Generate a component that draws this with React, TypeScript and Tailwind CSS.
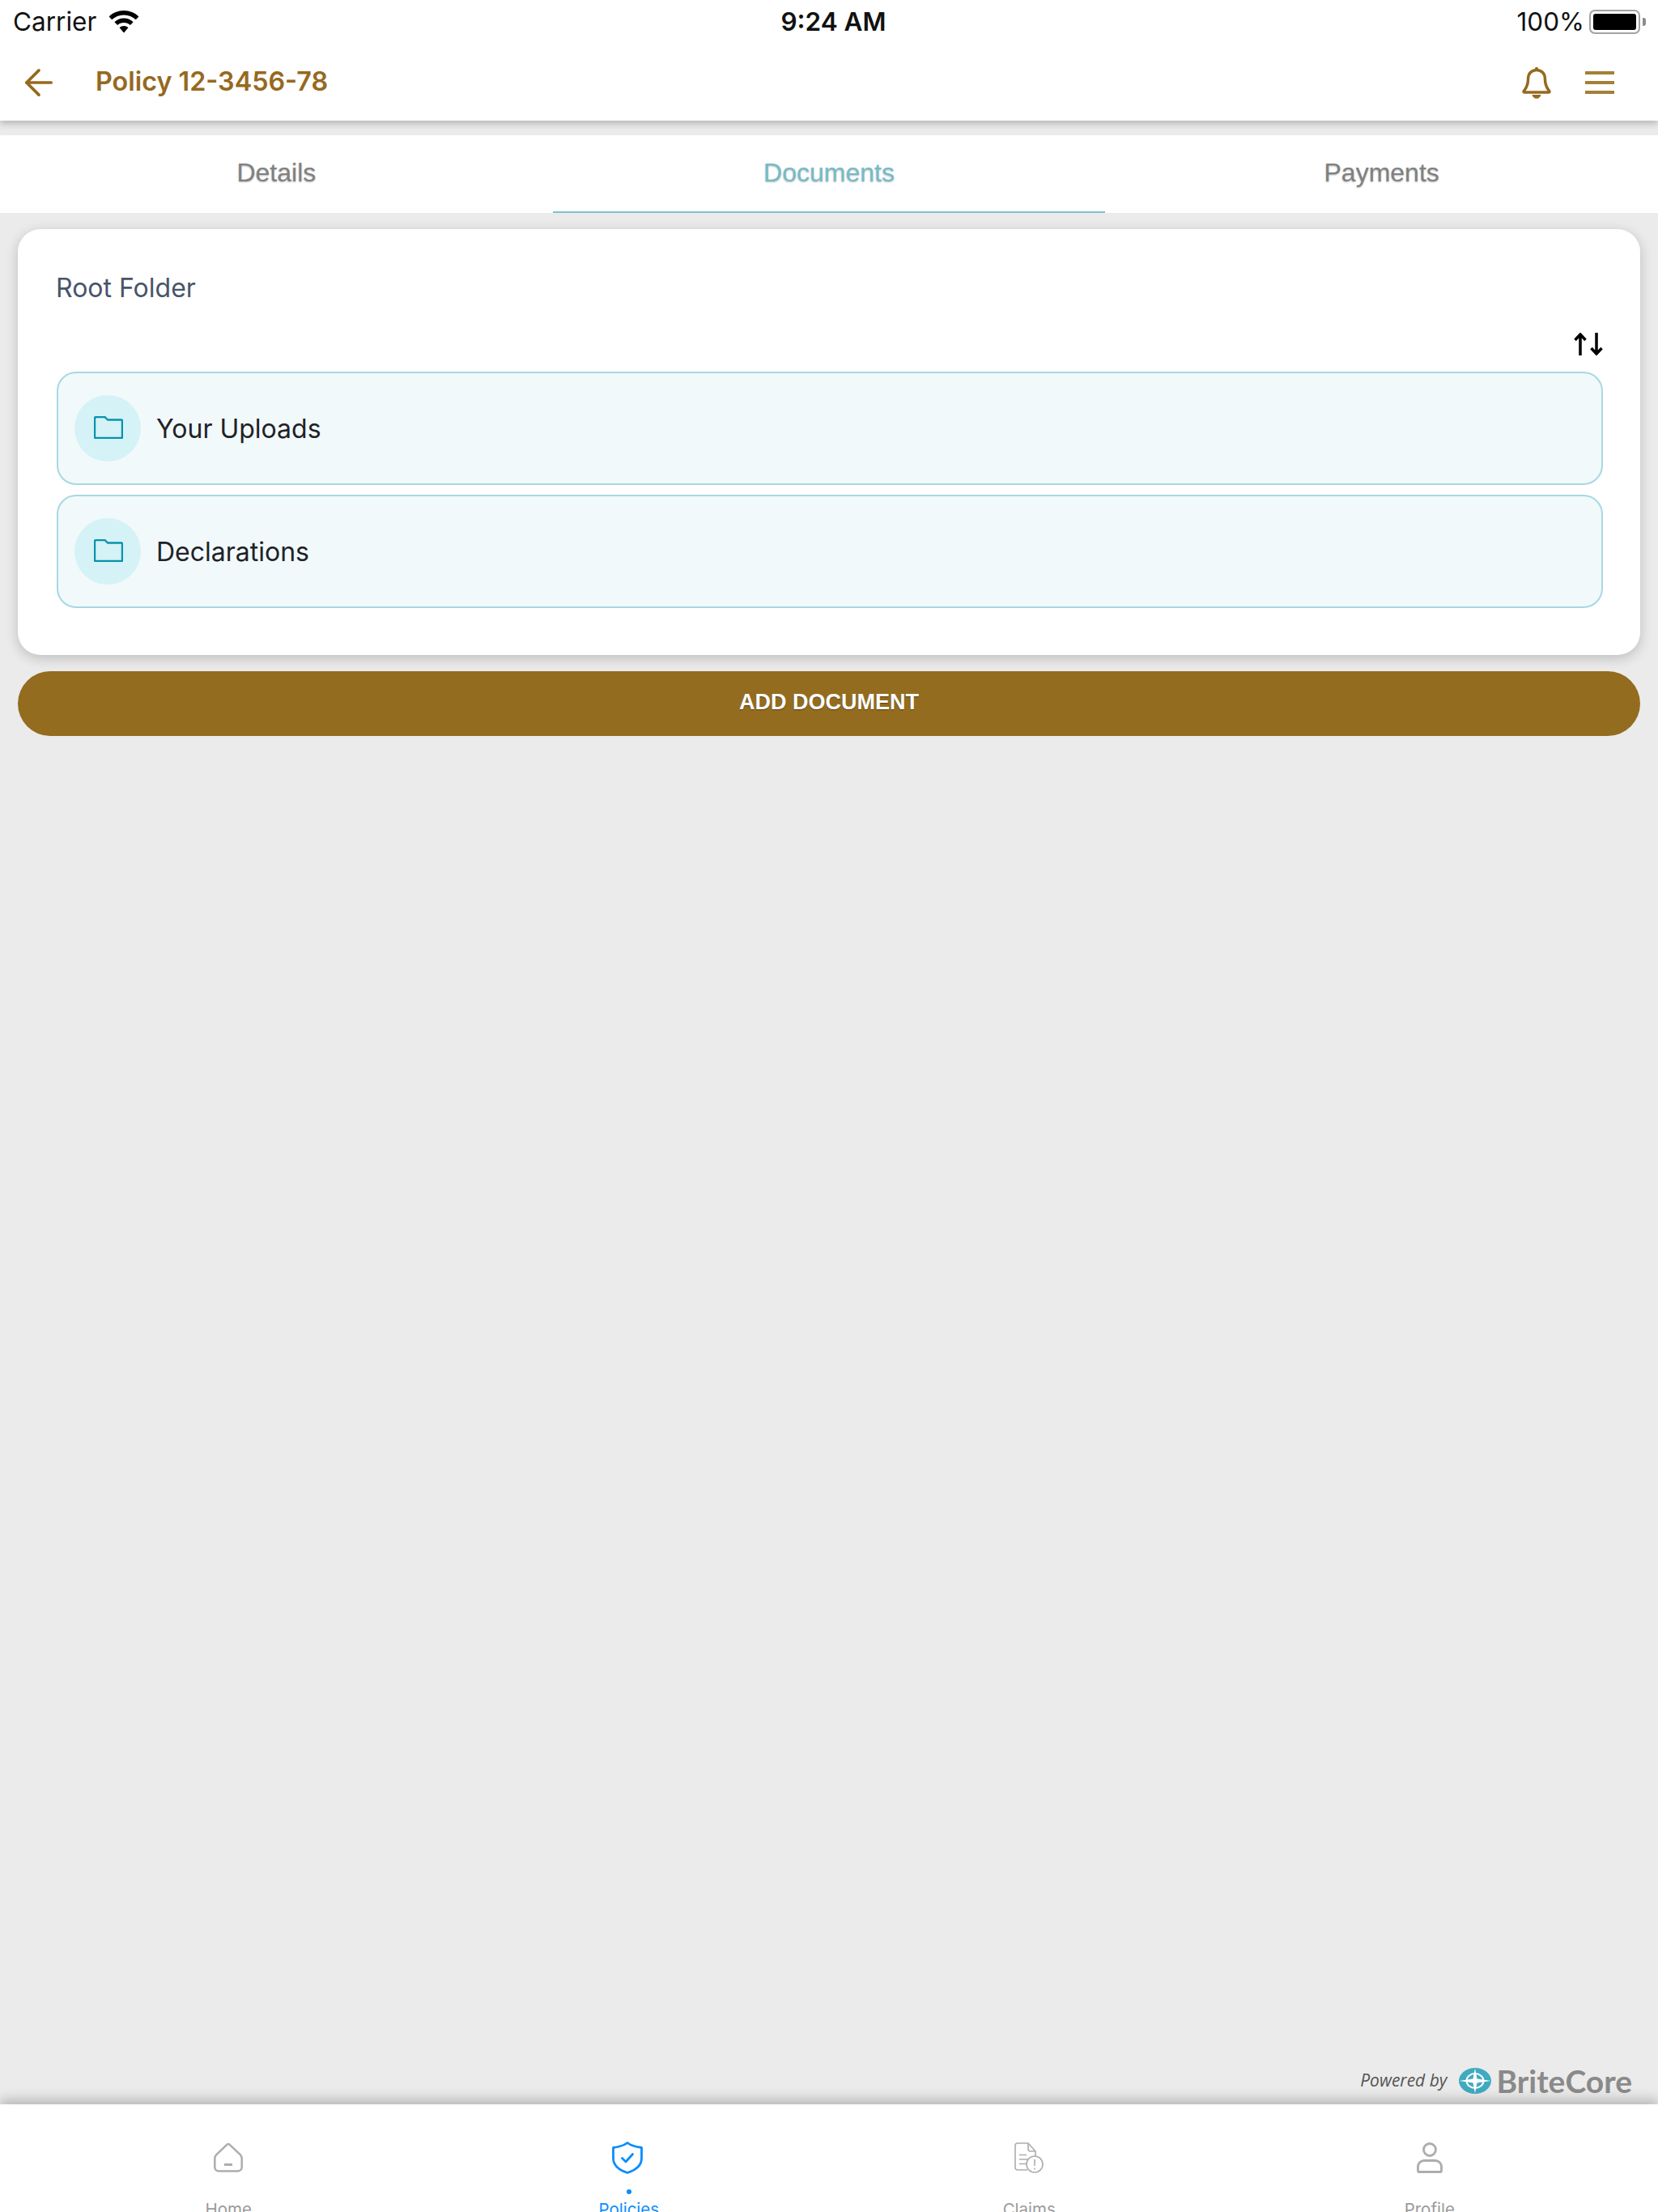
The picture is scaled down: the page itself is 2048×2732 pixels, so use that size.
import { ArrowLeft } from "lucide-react";

const inter = "font-['Inter',sans-serif]";

function Wifi() {
  return (
    <svg viewBox="0 0 38 28" className="w-[38px] h-[28px]" fill="black">
      <path d="M19 0C11.8 0 5.4 2.8 0.6 7.4l3.6 3.9C8.1 7.6 13.3 5.4 19 5.4s10.9 2.2 14.8 5.9l3.6-3.9C32.6 2.8 26.2 0 19 0z" />
      <path d="M19 9.6c-4.5 0-8.6 1.8-11.6 4.6l3.7 3.9c2-2 4.8-3.2 7.9-3.2s5.9 1.2 7.9 3.2l3.7-3.9c-3-2.8-7.1-4.6-11.6-4.6z" />
      <path d="M19 19c-2.1 0-4 .8-5.4 2.2L19 27.4l5.4-6.2C23 19.8 21.1 19 19 19z" />
    </svg>
  );
}

function Battery() {
  return (
    <div className="flex items-center gap-[3px]">
      <div className="w-[63px] h-[30px] rounded-[7px] border-2 border-[#a3a3a3] p-[3px]">
        <div className="w-full h-full rounded-[3px] bg-black" />
      </div>
      <div className="w-[4px] h-[10px] rounded-r-[3px] bg-[#8c8c8c]" />
    </div>
  );
}

function Bell() {
  return (
    <svg viewBox="0 0 36 40" className="w-[36px] h-[40px]" fill="none" stroke="#96691f" strokeWidth="3.5" strokeLinejoin="round">
      <path d="M18 4.5c-6.3 0-10.4 4.6-10.4 10.6 0 7-1.6 11.2-5.4 15.6-.4.6-.1 1.3.6 1.3h30.4c.7 0 1-.7.6-1.3-3.8-4.4-5.4-8.6-5.4-15.6C28.4 9.1 24.3 4.5 18 4.5z" />
      <circle cx="18" cy="2.8" r="2" fill="#96691f" stroke="none" />
      <path d="M12.5 35h11c-.7 3-2.8 4.7-5.5 4.7S13.2 38 12.5 35z" fill="#96691f" stroke="none" />
    </svg>
  );
}

function Folder() {
  return (
    <svg viewBox="0 0 36 28" className="w-[36px] h-[28px] ml-[1px] -mt-[2px]" fill="none" stroke="#0793ad" strokeWidth="2.4" strokeLinejoin="round">
      <path d="M1 3a2 2 0 0 1 2-2h10.500l3.500 3.500h17a1.500 1.500 0 0 1 1 1.500v20a1 1 0 0 1-1 1H2a1 1 0 0 1-1-1z" />
    </svg>
  );
}

function SortIcon() {
  return (
    <svg viewBox="0 0 36 28" className="w-[36px] h-[28px]" fill="none" stroke="black" strokeWidth="3.5">
      <path d="M8 28V2M1.5 9 8 2l6.500 7" />
      <path d="M28 0v26M21.500 19l6.500 7 6.500-7" />
    </svg>
  );
}

function Logo() {
  return (
    <svg viewBox="0 0 40 32" className="w-[40px] h-[32px]">
      <ellipse cx="20" cy="16" rx="20" ry="16" fill="#3fabc0" />
      <ellipse cx="20" cy="16" rx="10.5" ry="9" fill="none" stroke="white" strokeWidth="2" />
      <path d="M20 0.5 22.500 13.500 39.500 16 22.500 18.500 20 31.500 17.500 18.500 0.500 16 17.500 13.500z" fill="white" />
    </svg>
  );
}

function HomeIcon() {
  return (
    <svg viewBox="0 0 36 36" className="w-[36px] h-[36px]" fill="none" stroke="#adadad" strokeWidth="2.5" strokeLinejoin="round">
      <path d="M16.300 1.800a2.400 2.400 0 0 1 3.400 0l13 12.400c1.300 1.300 2 2.800 2 4.600v10.700a5 5 0 0 1-5 5H6.300a5 5 0 0 1-5-5V18.800c0-1.800.7-3.300 2-4.600z" />
      <path d="M13 26.500h10" strokeWidth="3" />
    </svg>
  );
}

function ShieldIcon() {
  return (
    <svg viewBox="0 0 40 40" className="w-[40px] h-[40px] -ml-[3px]" fill="none" stroke="#0a8dff" strokeWidth="2.8" strokeLinejoin="round" strokeLinecap="round">
      <path d="M20 1.500c4 3.200 9.500 5 17.500 6v13c0 8.500-6.500 14.500-17.500 18-11-3.500-17.500-9.500-17.500-18v-13c8-1 13.500-2.800 17.500-6z" />
      <path d="M13.500 20.500 18 25l8.500-9.500" />
    </svg>
  );
}

function ClaimsIcon() {
  return (
    <svg viewBox="0 0 36 38" className="w-[36px] h-[38px]" fill="none" stroke="#adadad" strokeWidth="1.6" strokeLinejoin="round">
      <path d="M16 34H4a3 3 0 0 1-3-3V4a3 3 0 0 1 3-3h13l9 10v7" />
      <path d="M17 1v7a3 3 0 0 0 3 3h6" />
      <path d="M6 15.500h9M6 21h11M6 26.500h9" />
      <circle cx="25" cy="27" r="10" fill="white" />
      <path d="M25 21v8M25 31.500v2" />
    </svg>
  );
}

function ProfileIcon() {
  return (
    <svg viewBox="0 0 32 38" className="w-[32px] h-[38px]" fill="none" stroke="#adadad" strokeWidth="2.8" strokeLinejoin="round">
      <circle cx="16" cy="9" r="7.5" />
      <path d="M9 22.500h14a7.500 7.500 0 0 1 7.500 7.500v5.500a1 1 0 0 1-1 1H2.500a1 1 0 0 1-1-1V30A7.500 7.500 0 0 1 9 22.500z" />
    </svg>
  );
}

const tabs = [
  { label: "Home", icon: <HomeIcon /> },
  { label: "Policies", icon: <ShieldIcon />, active: true },
  { label: "Claims", icon: <ClaimsIcon /> },
  { label: "Profile", icon: <ProfileIcon /> },
];

export default function App() {
  return (
    <div className={`w-[2048px] h-[2732px] bg-[#ebebeb] flex flex-col overflow-hidden ${inter}`}>
      {/* Status bar + header */}
      <div className="relative z-10 bg-white h-[149px] shrink-0 shadow-[0_4px_8px_rgba(0,0,0,0.22)]">
        <div className="grid grid-cols-3 items-center h-[54px] pl-[16px] pr-[15px] text-[31.5px] text-[#111]">
          <div className="flex items-center gap-[15px]">
            <span>Carrier</span>
            <Wifi />
          </div>
          <div className="text-center font-semibold pl-[10px]">9:24 AM</div>
          <div className="flex items-center justify-end gap-[6px]">
            <span>100%</span>
            <Battery />
          </div>
        </div>
        <div className="flex items-center h-[95px] pl-[22px] pr-[54px]">
          <ArrowLeft className="w-[52px] h-[52px] text-[#96691f]" strokeWidth={1.7} />
          <div className="ml-[44px] text-[32.3px] font-semibold text-[#96691f]">Policy 12-3456-78</div>
          <div className="ml-auto flex items-center gap-[42px]">
            <Bell />
            <div className="flex flex-col gap-[8px] w-[36px]">
              <div className="h-[4px] bg-[#a47f35]" />
              <div className="h-[4px] bg-[#a47f35]" />
              <div className="h-[4px] bg-[#a47f35]" />
            </div>
          </div>
        </div>
      </div>

      {/* Tabs */}
      <div className="mt-[18px] h-[96px] bg-white grid grid-cols-3 shrink-0 font-['Liberation_Sans',sans-serif] text-[32px] [text-shadow:0_1px_2px_rgba(0,0,0,0.3)]">
        <div className="flex items-center justify-center pb-[4px] text-[#808080]">Details</div>
        <div className="flex items-center justify-center pb-[2px] text-[#74bcc8] border-b-2 border-[#7cc2cc]">Documents</div>
        <div className="flex items-center justify-center pb-[4px] text-[#808080]">Payments</div>
      </div>

      {/* Content */}
      <div className="flex-1 flex flex-col px-[22px] pt-[20px]">
        <div className="bg-white rounded-[28px] h-[526px] pl-[48px] pr-[46px] pt-[53px] shadow-[0_4px_16px_rgba(0,0,0,0.2)]">
          <div className="text-[32px] leading-[40px] text-[#475569] -ml-[1px]">Root Folder</div>
          <div className="flex justify-end mt-[35px] h-[28px]">
            <SortIcon />
          </div>
          <div className="flex flex-col gap-[12px] mt-[20px]">
            {["Your Uploads", "Declarations"].map((name) => (
              <div key={name} className="h-[140px] rounded-[24px] border-2 border-[#a8d8e2] bg-[#f1f9fb] flex items-center pl-[20px]">
                <div className="w-[82px] h-[82px] rounded-full bg-[#d5f2f7] flex items-center justify-center">
                  <Folder />
                </div>
                <span className="ml-[19px] pt-[2px] text-[32px] text-[#1f2227]">{name}</span>
              </div>
            ))}
          </div>
        </div>

        <div className="mt-[20px] h-[80px] pb-[3px] rounded-full bg-[#946c1f] flex items-center justify-center font-['Liberation_Sans',sans-serif] font-bold text-[27px] text-white [text-shadow:0_1px_1px_rgba(0,0,0,0.4)]">
          ADD DOCUMENT
        </div>

        <div className="mt-auto mb-[13px] flex items-center justify-end pr-[10px]">
          <span className="font-['Open_Sans',sans-serif] italic text-[21px] text-[#555]">Powered by</span>
          <span className="ml-[14px]"><Logo /></span>
          <span className="ml-[7px] font-['Lato',sans-serif] font-bold text-[39px] leading-[32px] text-[#8a8a8a]">BriteCore</span>
        </div>
      </div>

      {/* Bottom tab bar */}
      <div className="relative h-[133px] shrink-0 bg-white overflow-hidden shadow-[0_-6px_14px_rgba(0,0,0,0.22)] grid grid-cols-4 px-[35px] pt-[46px]">
        {tabs.map((t) => (
          <div key={t.label} className="flex flex-col items-center">
            <div className="h-[40px] flex items-center justify-center">{t.icon}</div>
            <div className={`mt-[19px] w-[6px] h-[6px] rounded-full ${t.active ? "bg-[#0a8dff]" : "bg-transparent"}`} />
            <div className={`mt-[7px] text-[20.5px] leading-[24px] ${t.active ? "text-[#0a8dff]" : "text-[#9a9a9a]"}`}>{t.label}</div>
          </div>
        ))}
      </div>
    </div>
  );
}
